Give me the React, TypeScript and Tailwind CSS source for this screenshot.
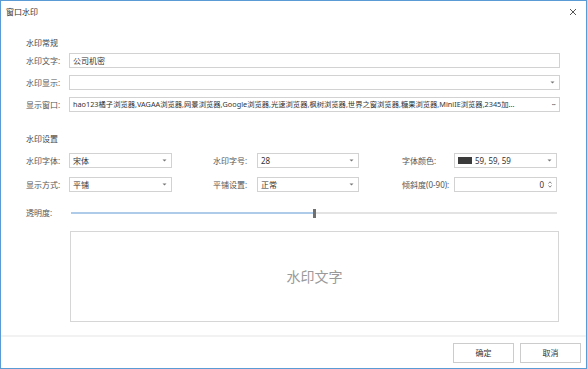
import { FunctionComponent, ReactNode } from 'react'

const font = "font-['Noto_Sans','Noto_Sans_CJK_SC',sans-serif]"

const Caret: FunctionComponent = () => (
  <svg width="5" height="3" viewBox="0 0 5 3" className="shrink-0">
    <path d="M0.5 0.5 L2.5 2.5 L4.5 0.5 Z" fill="#777" />
  </svg>
)

const Box: FunctionComponent<{ children?: ReactNode; className?: string }> = ({
  children,
  className = '',
}) => (
  <div
    className={`h-[15px] flex items-center border border-[#d2d2d2] bg-white pl-[3px] pr-[4px] text-[8px] leading-none text-[#333] overflow-hidden ${className}`}
  >
    {children}
  </div>
)

const Select: FunctionComponent<{ value?: ReactNode; className?: string }> = ({
  value,
  className = '',
}) => (
  <Box className={className}>
    <div className="flex-1 flex items-center gap-[3px] whitespace-nowrap">{value}</div>
    <Caret />
  </Box>
)

const Label: FunctionComponent<{ children: ReactNode; className?: string }> = ({
  children,
  className = '',
}) => (
  <div className={`text-[8px] leading-none text-[#555] whitespace-nowrap ${className}`}>
    {children}
  </div>
)

export default function App() {
  const browsers =
    'hao123橘子浏览器,VAGAA浏览器,网景浏览器,Google浏览器,光速浏览器,枫树浏览器,世界之窗浏览器,糖果浏览器,MiniIE浏览器,2345加...'

  return (
    <div
      className={`w-[587px] h-[369px] flex flex-col border border-[#5b9bd5] bg-white ${font}`}
    >
      {/* title bar */}
      <div className="h-[21px] shrink-0 flex items-center justify-between pl-[5px] pr-[9px]">
        <span className="text-[8px] leading-none text-[#333]">窗口水印</span>
        <svg width="8" height="8" viewBox="0 0 8 8">
          <path d="M1 1 L7 7 M7 1 L1 7" stroke="#555" strokeWidth="1" />
        </svg>
      </div>

      {/* body */}
      <div className="flex-1 flex flex-col pl-[25px] pr-[26px]">
        <div className="mt-[15px] h-[11px] flex items-center text-[8px] text-[#444]">水印常规</div>

        <div className="mt-[5px] flex flex-col gap-[7px]">
          <div className="flex items-center">
            <Label className="w-[43px]">水印文字:</Label>
            <Box className="flex-1">公司机密</Box>
          </div>
          <div className="flex items-center">
            <Label className="w-[43px]">水印显示:</Label>
            <Select className="flex-1" />
          </div>
          <div className="flex items-center">
            <Label className="w-[43px]">显示窗口:</Label>
            <Box className="flex-1">
              <span className="flex-1 min-w-0 whitespace-nowrap text-[7.3px]">{browsers}</span>
              <span className="shrink-0 ml-[6px] text-[#666] tracking-[-1px]">···</span>
            </Box>
          </div>
        </div>

        <div className="mt-[21px] h-[11px] flex items-center text-[8px] text-[#444]">水印设置</div>

        <div className="mt-[9px] grid grid-cols-[43px_103px_41px_44px_102px_43px_52px_103px] gap-y-[9px] items-center">
          <Label>水印字体:</Label>
          <Select value="宋体" />
          <div />
          <Label>水印字号:</Label>
          <Select value="28" />
          <div />
          <Label>字体颜色:</Label>
          <Select
            value={
              <>
                <span className="w-[14px] h-[7px] bg-[#3b3b3b] inline-block" />
                <span>59, 59, 59</span>
              </>
            }
          />

          <Label>显示方式:</Label>
          <Select value="平铺" />
          <div />
          <Label>平铺设置:</Label>
          <Select value="正常" />
          <div />
          <Label>倾斜度(0-90):</Label>
          <Box>
            <span className="flex-1 text-right pr-[4px]">0</span>
            <div className="flex flex-col gap-[1px]">
              <svg width="4" height="3" viewBox="0 0 4 3">
                <path d="M0.5 2.5 L2 0.8 L3.5 2.5" stroke="#666" fill="none" strokeWidth="0.8" />
              </svg>
              <svg width="4" height="3" viewBox="0 0 4 3">
                <path d="M0.5 0.5 L2 2.2 L3.5 0.5" stroke="#666" fill="none" strokeWidth="0.8" />
              </svg>
            </div>
          </Box>
        </div>

        <div className="mt-[16px] h-[10px] flex items-center">
          <Label className="w-[45px]">透明度:</Label>
          <div className="w-[486px] flex items-center">
            <div className="w-[242px] h-[2px] bg-[#aecbea]" />
            <div className="w-[3px] h-[9px] bg-[#707070]" />
            <div className="flex-1 h-[2px] bg-[#e3e3e3]" />
          </div>
        </div>

        <div className="mt-[13px] ml-[44px] w-[489px] h-[91px] border border-[#d6d6d6] flex items-center justify-center">
          <span className="text-[14px] leading-none text-[#9a9a9a]">水印文字</span>
        </div>
      </div>

      {/* footer */}
      <div className="h-[33px] shrink-0 border-t-2 border-[#f2f2f2] flex justify-end items-start gap-[6px] pt-[6px] pr-[5px]">
        <button className="w-[61px] h-[20px] border border-[#cccccc] bg-white text-[8px] text-[#333]">
          确定
        </button>
        <button className="w-[61px] h-[20px] border border-[#cccccc] bg-white text-[8px] text-[#333]">
          取消
        </button>
      </div>
    </div>
  )
}
